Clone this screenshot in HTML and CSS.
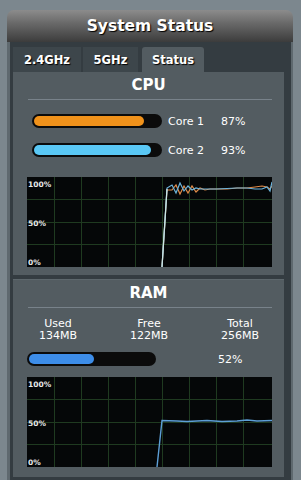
FILE: index.html
```html
<!DOCTYPE html>
<html>
<head>
<meta charset="utf-8">
<link rel="stylesheet" href="styles.css">
</head>
<body>
<div class="frame">
  <div class="titlebar">System Status</div>
  <div class="body">
    <div class="tabs">
      <div class="tab">2.4GHz</div>
      <div class="tab">5GHz</div>
      <div class="tab active">Status</div>
    </div>
    <div class="section cpu">
      <div class="heading">CPU</div>
      <div class="rule"></div>
      <div class="cores">
        <div class="core">
          <div class="bar"><div class="fill orange" style="width:87%"></div></div>
          <span class="lbl">Core 1</span><span class="pct">87%</span>
        </div>
        <div class="core">
          <div class="bar"><div class="fill cyan" style="width:93%"></div></div>
          <span class="lbl">Core 2</span><span class="pct">93%</span>
        </div>
      </div>
      <div class="graph">
        <svg width="245" height="90" viewBox="0 0 245 90">
          <g stroke="#1f3a20" stroke-width="1">
            <line x1="27.5" y1="0" x2="27.5" y2="90"/><line x1="54.5" y1="0" x2="54.5" y2="90"/>
            <line x1="81.5" y1="0" x2="81.5" y2="90"/><line x1="108.5" y1="0" x2="108.5" y2="90"/>
            <line x1="135.5" y1="0" x2="135.5" y2="90"/><line x1="162.5" y1="0" x2="162.5" y2="90"/>
            <line x1="189.5" y1="0" x2="189.5" y2="90"/><line x1="216.5" y1="0" x2="216.5" y2="90"/>
            <line x1="0" y1="22.5" x2="245" y2="22.5"/><line x1="0" y1="45.5" x2="245" y2="45.5"/>
            <line x1="0" y1="67.5" x2="245" y2="67.5"/>
          </g>
          <polyline fill="none" stroke="#e08a48" stroke-width="1.2" points="135,90 140,13 145,13 149,8 153,17 157,9 161,16 165,9 169,15 173,11 178,13 183,12 190,12 200,12 210,11 220,11 228,10 235,9 240,10 243,12 245,9"/>
          <polyline fill="none" stroke="#6cb4dc" stroke-width="1.2" points="135,90 140,11 145,8 149,16 153,6 157,14 161,9 165,13 169,11 173,12 178,12 190,12 210,11 220,11 228,12 235,12 240,10 243,14 245,5"/>
          <line x1="135" y1="90" x2="140" y2="12" stroke="#cde6e6" stroke-width="1.2"/>
        </svg>
        <span class="ax a100">100%</span><span class="ax a50">50%</span><span class="ax a0">0%</span>
      </div>
    </div>
    <div class="section ram">
      <div class="heading">RAM</div>
      <div class="rule"></div>
      <div class="stats">
        <div class="stat"><div>Used</div><div>134MB</div></div>
        <div class="stat"><div>Free</div><div>122MB</div></div>
        <div class="stat"><div>Total</div><div>256MB</div></div>
      </div>
      <div class="ramrow">
        <div class="bar rambar"><div class="fill blue" style="width:52%"></div></div>
        <span class="pct">52%</span>
      </div>
      <div class="graph">
        <svg width="245" height="90" viewBox="0 0 245 90">
          <g stroke="#1f3a20" stroke-width="1">
            <line x1="27.5" y1="0" x2="27.5" y2="90"/><line x1="54.5" y1="0" x2="54.5" y2="90"/>
            <line x1="81.5" y1="0" x2="81.5" y2="90"/><line x1="108.5" y1="0" x2="108.5" y2="90"/>
            <line x1="135.5" y1="0" x2="135.5" y2="90"/><line x1="162.5" y1="0" x2="162.5" y2="90"/>
            <line x1="189.5" y1="0" x2="189.5" y2="90"/><line x1="216.5" y1="0" x2="216.5" y2="90"/>
            <line x1="0" y1="22.5" x2="245" y2="22.5"/><line x1="0" y1="45.5" x2="245" y2="45.5"/>
            <line x1="0" y1="67.5" x2="245" y2="67.5"/>
          </g>
          <polyline fill="none" stroke="#5d9fd6" stroke-width="1.4" points="130,90 135,43.5 150,44 160,44.5 170,44 180,43.5 195,44.5 210,44 220,43 230,44 245,43.5"/>
        </svg>
        <span class="ax a100">100%</span><span class="ax a50">50%</span><span class="ax a0">0%</span>
      </div>
    </div>
  </div>
</div>
</body>
</html>
```
FILE: styles.css
```css
html, body {
  margin: 0;
  padding: 0;
}
body {
  background: #7c878e;
  font-family: "DejaVu Sans", Verdana, sans-serif;
  color: #fff;
  width: 301px;
  height: 480px;
  overflow: hidden;
}
.frame {
  margin: 10px 8px 0 7px;
}
.titlebar {
  height: 32px;
  border-radius: 7px 7px 0 0;
  background: linear-gradient(#8c8c8c, #6a6a6a 40%, #3c3c3c);
  text-align: center;
  font-weight: bold;
  font-size: 15.5px;
  line-height: 33px;
  text-shadow: 1px 1px 1px #000;
}
.body {
  background: #343c41;
  padding: 5px 7px 0 3px;
  border-left: 3px solid #5f696f;
  border-right: 2px solid #5e686e;
  height: 440px;
}
.tabs {
  display: flex;
  gap: 2px;
  height: 25px;
}
.tab {
  background: #3d464b;
  font-weight: bold;
  font-size: 11.5px;
  line-height: 26px;
  text-align: center;
  text-shadow: 1px 1px 1px #000;
}
.tab:nth-child(1) { width: 68px; }
.tab:nth-child(2) { width: 55px; }
.tab:nth-child(3) { width: 62px; margin-left: 2px; }
.tab.active {
  background: #535c61;
  border-radius: 3px 3px 0 0;
}
.section {
  background: #535c61;
  padding: 0 14px 0 14px;
}
.cpu {
  height: 203px;
}
.ram {
  margin-top: 4px;
  height: 197px;
  border-top: 1px solid #5d676c;
}
.heading {
  text-align: center;
  font-weight: bold;
  font-size: 15px;
  line-height: 27px;
  height: 27px;
}
.rule {
  height: 1px;
  background: #78828a;
  margin: 0 0 0 1px;
  width: 244px;
}
.cores {
  display: flex;
  flex-direction: column;
  gap: 15px;
  padding: 14px 0 0 5px;
}
.core {
  display: flex;
  align-items: center;
  height: 14px;
  font-size: 11px;
}
.bar {
  width: 130px;
  height: 14px;
  border-radius: 7px;
  background: #0b0b0b;
  padding: 2px;
  box-sizing: border-box;
}
.fill {
  height: 10px;
  border-radius: 5px;
}
.orange { background: #f0921b; }
.cyan { background: #5ac8f5; }
.blue { background: #3d8de8; }
.lbl {
  margin-left: 6px;
  width: 53px;
}
.pct {
  font-size: 11px;
}
.graph {
  position: relative;
  margin: 20px 0 0 0;
  width: 245px;
  height: 90px;
  background: #050708;
}
.graph svg {
  display: block;
}
.ax {
  position: absolute;
  left: 1px;
  font-size: 7.5px;
  font-weight: bold;
  color: #e8e8e8;
}
.a100 { top: 3px; }
.a50 { top: 42px; }
.a0 { top: 81px; }
.stats {
  display: grid;
  grid-template-columns: 62px 62px 62px;
  column-gap: 29px;
  font-size: 11px;
  text-align: center;
  line-height: 12px;
  padding: 10px 0 0 0;
}
.ramrow {
  display: flex;
  align-items: center;
  margin-top: 10px;
  height: 14px;
}
.rambar {
  width: 129px;
}
.ramrow .pct {
  margin-left: 62px;
}
.ram .graph {
  margin-top: 11px;
}
```
